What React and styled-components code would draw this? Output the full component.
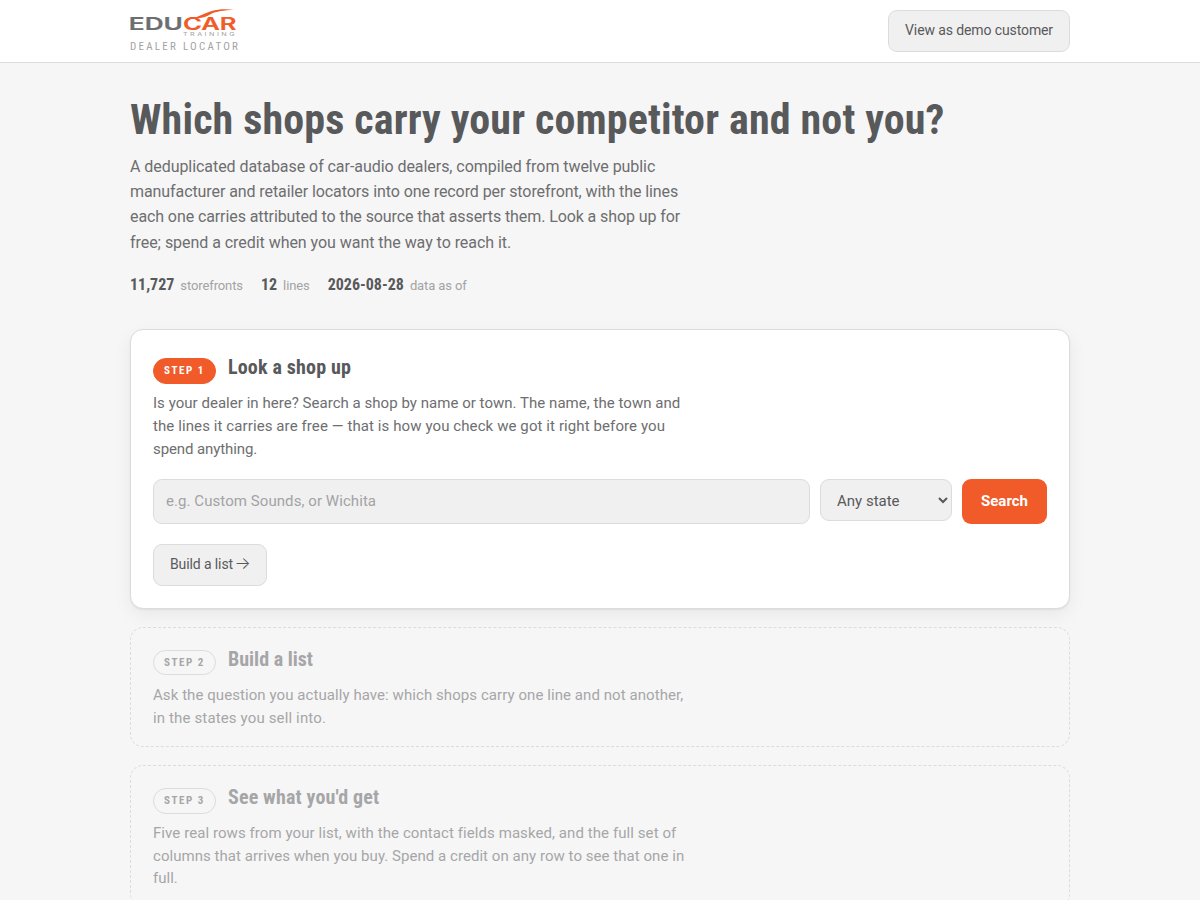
import React, { useState } from 'react'
import styled, { createGlobalStyle, css } from 'styled-components'

const GlobalStyle = createGlobalStyle`
  * {
    box-sizing: border-box;
  }

  body {
    margin: 0;
    height: 900px;
    overflow: hidden;
    background: #f6f6f6;
    color: #58595b;
    font-family: Roboto, 'Liberation Sans', sans-serif;
    font-size: 15px;
    line-height: 1.52;
  }

  h1, h2, p {
    margin: 0;
  }
`

const condensed = css`
  font-family: 'Roboto Condensed', Roboto, sans-serif;
  font-stretch: 75%;
`

const Header = styled.header`
  height: 63px;
  background: #fff;
  border-bottom: 1px solid #dcdcdc;
`

const HeaderInner = styled.div`
  display: flex;
  align-items: center;
  justify-content: space-between;
  width: 940px;
  height: 62px;
  margin: 0 auto;
`

const Brand = styled.div`
  display: flex;
  flex-direction: column;
  gap: 3px;

  svg {
    display: block;
    overflow: visible;
  }
`

const BrandSub = styled.span`
  ${condensed}
  color: #a3a3a5;
  font-size: 11px;
  line-height: 13px;
  letter-spacing: 2.26px;
  text-transform: uppercase;
`

const Button = styled.button`
  height: 42px;
  padding: 0 16px 2px;
  border: 1px solid #dcdcdc;
  border-radius: 9px;
  background: #f0f0f0;
  color: #58595b;
  font-family: inherit;
  font-size: 14px;
  letter-spacing: -0.11px;
`

const Arrow = styled.span`
  display: inline-block;
  height: 12px;
  margin: 0 -1px 0 -2px;
  font-family: Inter, sans-serif;
  font-size: 17px;
  font-weight: 300;
  line-height: 12px;
`

const Main = styled.main`
  width: 940px;
  margin: 0 auto;
  padding-top: 33px;
`

const Title = styled.h1`
  ${condensed}
  font-size: 42px;
  font-weight: 700;
  line-height: 48px;
  letter-spacing: 0.14px;
`

const Lead = styled.p`
  width: 560px;
  margin-top: 10px;
  color: #6d6e70;
  font-size: 16px;
  line-height: 25.2px;
`

const Line = styled.span`
  display: block;
  letter-spacing: ${p => p.$track || 0}px;
  white-space: nowrap;
`

const Stats = styled.div`
  display: flex;
  gap: 18px;
  margin-top: 18px;
  height: 24px;
`

const Stat = styled.div`
  display: flex;
  align-items: baseline;
  gap: 6px;
  color: #a3a3a5;
  font-size: 13px;
  line-height: 24px;
  letter-spacing: -0.11px;

  strong {
    ${condensed}
    color: #58595b;
    font-size: 16px;
    letter-spacing: 0;
  }
`

const Steps = styled.div`
  display: flex;
  flex-direction: column;
  gap: 18px;
  margin-top: 32.4px;
`

const Step = styled.section`
  padding: ${p => p.$active ? '22px' : '16px 22px 16.6px'};
  border: 1px ${p => p.$active ? 'solid' : 'dashed'} #dcdcdc;
  border-radius: 13px;
  background: ${p => p.$active ? '#fff' : 'transparent'};
  box-shadow: ${p => p.$active ? '0 1px 2px rgba(0, 0, 0, 0.06), 0 6px 18px rgba(0, 0, 0, 0.06)' : 'none'};
  color: ${p => p.$active ? '#6d6e70' : '#a6a6a8'};
`

const StepHead = styled.div`
  display: flex;
  align-items: flex-start;
  gap: 12px;
  height: 32px;
`

const Badge = styled.span`
  ${condensed}
  height: 25.6px;
  width: 63px;
  margin-top: 6px;
  padding-left: 10px;
  border: 1px solid ${p => p.$active ? '#f15a29' : '#dcdcdc'};
  border-radius: 13px;
  background: ${p => p.$active ? '#f15a29' : 'transparent'};
  color: ${p => p.$active ? '#fff' : '#a6a6a8'};
  font-size: 11px;
  font-weight: 700;
  line-height: 23px;
  letter-spacing: 1.55px;
  text-transform: uppercase;
  white-space: nowrap;
`

const StepTitle = styled.h2`
  ${condensed}
  color: ${p => p.$active ? '#58595b' : '#a6a6a8'};
  font-size: 20px;
  font-weight: 700;
  line-height: 30px;
  letter-spacing: ${p => p.$track || 0}px;
`

const StepText = styled.p`
  width: 535px;
  margin-top: 8px;
  font-size: 15px;
  line-height: ${p => p.$leading || 22.8}px;
`

const SearchForm = styled.form`
  display: flex;
  align-items: flex-start;
  gap: 10px;
  margin: 18px 0 20px;
`

const SearchInput = styled.input`
  flex: 1;
  height: 45px;
  padding: 0 12px;
  border: 1px solid #dcdcdc;
  border-radius: 9px;
  background: #f0f0f0;
  color: #58595b;
  font: 15px Roboto, sans-serif;
  letter-spacing: 0.07px;

  &::placeholder {
    color: #a3a3a5;
  }
`

const StateSelect = styled.select`
  width: 132px;
  height: 42px;
  padding: 2px 0 0 12px;
  border: 1px solid #dcdcdc;
  border-radius: 9px;
  background: #f0f0f0;
  color: #58595b;
  font: 15px Roboto, sans-serif;
`

const SearchButton = styled.button`
  width: 85px;
  height: 45px;
  padding: 0;
  border: 0;
  border-radius: 9px;
  background: #f15a29;
  color: #fff;
  font: 700 15px Roboto, sans-serif;
`

const Logo = () => (
  <svg width="107" height="28" viewBox="0 0 107 28" fontFamily="Inter, sans-serif">
    <text x="-1.2" y="20.7" fontSize="17" fontWeight="600" fill="#6d6e70" stroke="#6d6e70" strokeWidth="0.2" textLength="54" lengthAdjust="spacingAndGlyphs">EDU</text>
    <text x="53" y="20.7" fontSize="17" fontWeight="600" fill="#f15a29" stroke="#f15a29" strokeWidth="0.2" textLength="53.5" lengthAdjust="spacingAndGlyphs">CAR</text>
    <path d="M60 9.2 C69 8.4 73 4.5 81 2.2 C89 0 97 0 104 1 C94 1.2 86 2.4 81 5 C75 8.4 70 10 60 9.2 Z" fill="#f15a29" />
    <text x="53" y="27" fontSize="4.6" fill="#a3a3a5" textLength="54" letterSpacing="1.6" lengthAdjust="spacingAndGlyphs">TRAINING</text>
  </svg>
)

export default () => {
  const [ query, setQuery ] = useState('')

  return (
    <>
      <GlobalStyle />
      <Header>
        <HeaderInner>
          <Brand>
            <Logo />
            <BrandSub>Dealer locator</BrandSub>
          </Brand>
          <Button>View as demo customer</Button>
        </HeaderInner>
      </Header>
      <Main>
        <Title>Which shops carry your competitor and not you?</Title>
        <Lead>
          <Line $track={-0.055}>A deduplicated database of car-audio dealers, compiled from twelve public</Line>
          <Line $track={-0.083}>manufacturer and retailer locators into one record per storefront, with the lines</Line>
          <Line $track={-0.095}>each one carries attributed to the source that asserts them. Look a shop up for</Line>
          <Line $track={-0.045}>free; spend a credit when you want the way to reach it.</Line>
        </Lead>
        <Stats>
          <Stat><strong>11,727</strong>storefronts</Stat>
          <Stat><strong>12</strong>lines</Stat>
          <Stat><strong>2026-08-28</strong>data as of</Stat>
        </Stats>
        <Steps>
          <Step $active>
            <StepHead>
              <Badge $active>Step 1</Badge>
              <StepTitle $active $track={0.16}>Look a shop up</StepTitle>
            </StepHead>
            <StepText>
              <Line $track={0.035}>Is your dealer in here? Search a shop by name or town. The name, the town and</Line>
              <Line $track={0.095}>the lines it carries are free — that is how you check we got it right before you</Line>
              <Line $track={-0.1}>spend anything.</Line>
            </StepText>
            <SearchForm onSubmit={e => e.preventDefault()}>
              <SearchInput
                placeholder="e.g. Custom Sounds, or Wichita"
                value={query}
                onChange={e => setQuery(e.target.value)}
              />
              <StateSelect>
                <option>Any state</option>
              </StateSelect>
              <SearchButton>Search</SearchButton>
            </SearchForm>
            <Button>Build a list <Arrow>→</Arrow></Button>
          </Step>
          <Step>
            <StepHead>
              <Badge>Step 2</Badge>
              <StepTitle>Build a list</StepTitle>
            </StepHead>
            <StepText $leading={23}>
              <Line $track={0.07}>Ask the question you actually have: which shops carry one line and not another,</Line>
              <Line $track={0.14}>in the states you sell into.</Line>
            </StepText>
          </Step>
          <Step>
            <StepHead>
              <Badge>Step 3</Badge>
              <StepTitle $track={0.14}>See what you'd get</StepTitle>
            </StepHead>
            <StepText $leading={22.5}>
              <Line $track={0.075}>Five real rows from your list, with the contact fields masked, and the full set of</Line>
              <Line $track={0.045}>columns that arrives when you buy. Spend a credit on any row to see that one in</Line>
              <Line>full.</Line>
            </StepText>
          </Step>
        </Steps>
      </Main>
    </>
  )
}
